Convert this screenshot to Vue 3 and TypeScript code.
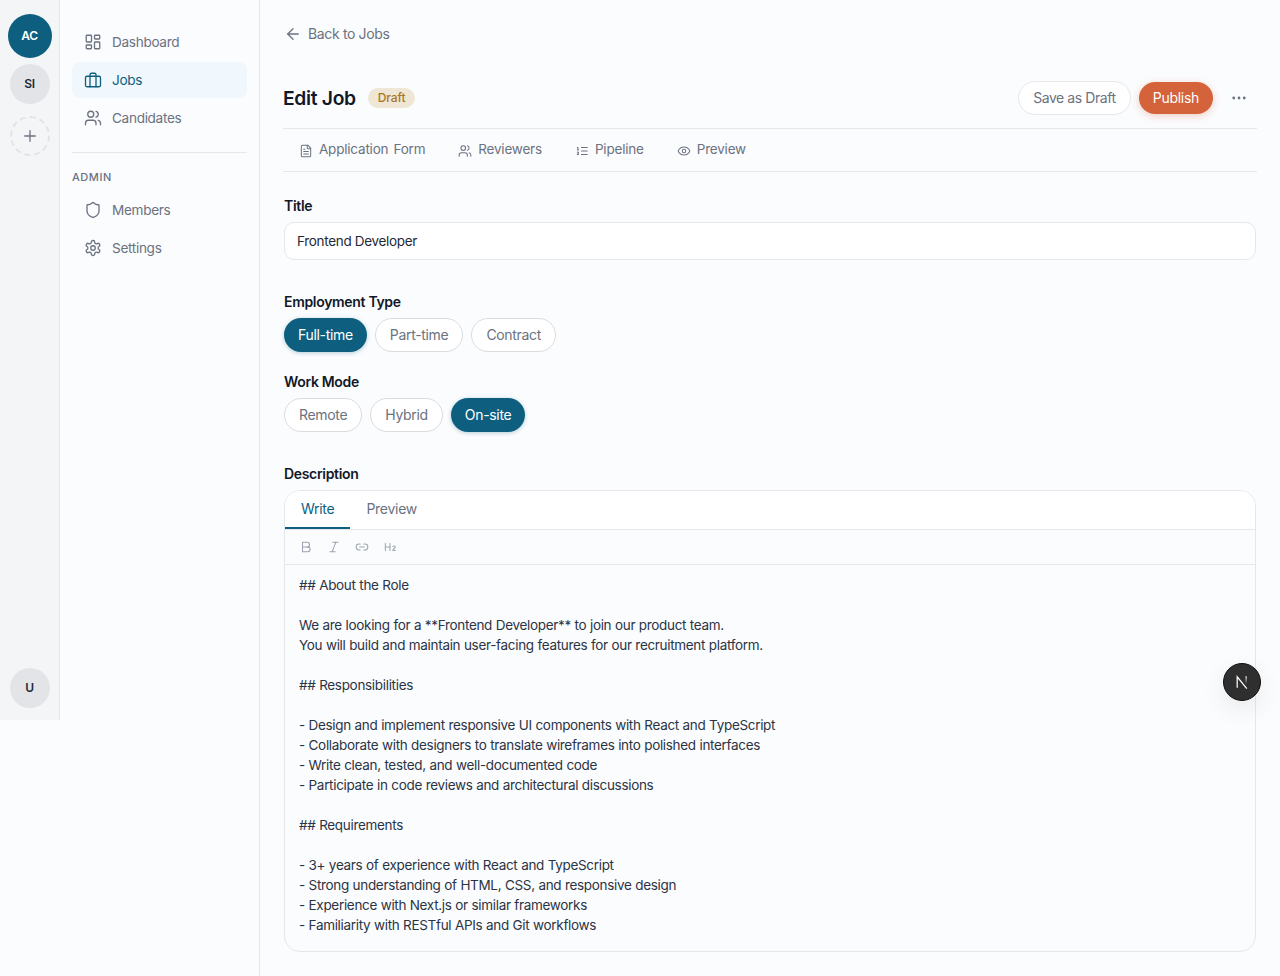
<script setup lang="ts">
const icons: Record<string, string> = {
  dashboard: '<rect x="3" y="3" width="7" height="9" rx="1"/><rect x="14" y="3" width="7" height="5" rx="1"/><rect x="14" y="12" width="7" height="9" rx="1"/><rect x="3" y="16" width="7" height="5" rx="1"/>',
  jobs: '<rect x="2" y="7" width="20" height="14" rx="2"/><path d="M16 21V5a2 2 0 0 0-2-2h-4a2 2 0 0 0-2 2v16"/>',
  users: '<path d="M16 21v-2a4 4 0 0 0-4-4H6a4 4 0 0 0-4 4v2"/><circle cx="9" cy="7" r="4"/><path d="M22 21v-2a4 4 0 0 0-3-3.87"/><path d="M16 3.13a4 4 0 0 1 0 7.75"/>',
  shield: '<path d="M20 13c0 5-3.5 7.5-7.66 8.95a1 1 0 0 1-.67-.01C7.5 20.5 4 18 4 13V6a1 1 0 0 1 1-1c2 0 4.5-1.2 6.24-2.72a1.17 1.17 0 0 1 1.52 0C14.51 3.81 17 5 19 5a1 1 0 0 1 1 1z"/>',
  settings: '<path d="M12.22 2h-.44a2 2 0 0 0-2 2v.18a2 2 0 0 1-1 1.73l-.43.25a2 2 0 0 1-2 0l-.15-.08a2 2 0 0 0-2.73.73l-.22.38a2 2 0 0 0 .73 2.73l.15.1a2 2 0 0 1 1 1.72v.51a2 2 0 0 1-1 1.74l-.15.09a2 2 0 0 0-.73 2.73l.22.38a2 2 0 0 0 2.73.73l.15-.08a2 2 0 0 1 2 0l.43.25a2 2 0 0 1 1 1.73V20a2 2 0 0 0 2 2h.44a2 2 0 0 0 2-2v-.18a2 2 0 0 1 1-1.73l.43-.25a2 2 0 0 1 2 0l.15.08a2 2 0 0 0 2.73-.73l.22-.39a2 2 0 0 0-.73-2.73l-.15-.08a2 2 0 0 1-1-1.74v-.5a2 2 0 0 1 1-1.74l.15-.09a2 2 0 0 0 .73-2.73l-.22-.38a2 2 0 0 0-2.73-.73l-.15.08a2 2 0 0 1-2 0l-.43-.25a2 2 0 0 1-1-1.73V4a2 2 0 0 0-2-2z"/><circle cx="12" cy="12" r="3"/>',
  file: '<path d="M15 2H6a2 2 0 0 0-2 2v16a2 2 0 0 0 2 2h12a2 2 0 0 0 2-2V7Z"/><path d="M14 2v4a2 2 0 0 0 2 2h4"/><path d="M10 9H8"/><path d="M16 13H8"/><path d="M16 17H8"/>',
  list: '<path d="M11 12h10"/><path d="M11 18h10"/><path d="M11 6h10"/><path d="M4 10h2"/><path d="M4 6h1v4"/><path d="M6 18H4c0-1 2-1.5 2-3s-1-1.5-2-1"/>',
  eye: '<path d="M2 12s3-7 10-7 10 7 10 7-3 7-10 7-10-7-10-7Z"/><circle cx="12" cy="12" r="3"/>',
  bold: '<path d="M14 12a4 4 0 0 0 0-8H6v8"/><path d="M15 20a4 4 0 0 0 0-8H6v8Z"/>',
  italic: '<line x1="19" y1="4" x2="10" y2="4"/><line x1="14" y1="20" x2="5" y2="20"/><line x1="15" y1="4" x2="9" y2="20"/>',
  link: '<path d="M9 17H7A5 5 0 0 1 7 7h2"/><path d="M15 7h2a5 5 0 1 1 0 10h-2"/><line x1="8" y1="12" x2="16" y2="12"/>',
  heading: '<path d="M4 12h8"/><path d="M4 18V6"/><path d="M12 18V6"/><path d="M21 18h-4c0-4 4-3 4-6 0-1.5-2-2.5-4-1"/>',
}

const mainNav = [
  { label: 'Dashboard', icon: 'dashboard' },
  { label: 'Jobs', icon: 'jobs', active: true },
  { label: 'Candidates', icon: 'users' },
]
const adminNav = [
  { label: 'Members', icon: 'shield' },
  { label: 'Settings', icon: 'settings' },
]
const jobTabs = [
  { label: 'Application Form', icon: 'file' },
  { label: 'Reviewers', icon: 'users' },
  { label: 'Pipeline', icon: 'list' },
  { label: 'Preview', icon: 'eye' },
]
const employmentTypes = [
  { label: 'Full-time', active: true },
  { label: 'Part-time' },
  { label: 'Contract' },
]
const workModes = [
  { label: 'Remote' },
  { label: 'Hybrid' },
  { label: 'On-site', active: true },
]
const toolbar = ['bold', 'italic', 'link', 'heading']

const description = `## About the Role

We are looking for a **Frontend Developer** to join our product team.
You will build and maintain user-facing features for our recruitment platform.

## Responsibilities

- Design and implement responsive UI components with React and TypeScript
- Collaborate with designers to translate wireframes into polished interfaces
- Write clean, tested, and well-documented code
- Participate in code reviews and architectural discussions

## Requirements

- 3+ years of experience with React and TypeScript
- Strong understanding of HTML, CSS, and responsive design
- Experience with Next.js or similar frameworks
- Familiarity with RESTful APIs and Git workflows`
</script>

<template>
  <div class="layout">
    <!-- Переключатель организаций -->
    <aside class="rail">
      <div class="rail__top">
        <div class="avatar avatar--current"><span>AC</span></div>
        <div class="avatar"><span>SI</span></div>
        <div class="avatar avatar--add">
          <svg width="18" height="18" viewBox="0 0 24 24" class="icon"><path d="M5 12h14" /><path d="M12 5v14" /></svg>
        </div>
      </div>
      <div class="avatar"><span>U</span></div>
    </aside>

    <!-- Боковое меню -->
    <nav class="sidebar">
      <a v-for="item in mainNav" :key="item.label" class="nav-item" :class="{ 'nav-item--active': item.active }">
        <svg width="18" height="18" viewBox="0 0 24 24" class="icon" v-html="icons[item.icon]"></svg>
        <span>{{ item.label }}</span>
      </a>
      <div class="sidebar__divider"></div>
      <div class="sidebar__heading">ADMIN</div>
      <a v-for="item in adminNav" :key="item.label" class="nav-item">
        <svg width="18" height="18" viewBox="0 0 24 24" class="icon" v-html="icons[item.icon]"></svg>
        <span>{{ item.label }}</span>
      </a>
    </nav>

    <main class="main">
      <a class="back">
        <svg width="18" height="18" viewBox="0 0 24 24" class="icon"><path d="m12 19-7-7 7-7" /><path d="M19 12H5" /></svg>
        <span>Back to Jobs</span>
      </a>

      <header class="job-header">
        <div class="job-header__title">
          <h1>Edit Job</h1>
          <span class="badge">Draft</span>
        </div>
        <div class="job-header__actions">
          <button class="btn btn--ghost">Save as Draft</button>
          <button class="btn btn--primary">Publish</button>
          <button class="btn-more" aria-label="More">
            <svg width="18" height="18" viewBox="0 0 24 24" class="icon">
              <circle cx="12" cy="12" r="1" /><circle cx="19" cy="12" r="1" /><circle cx="5" cy="12" r="1" />
            </svg>
          </button>
        </div>
      </header>

      <div class="job-tabs">
        <a v-for="tab in jobTabs" :key="tab.label" class="job-tab">
          <svg width="14" height="14" viewBox="0 0 24 24" class="icon" v-html="icons[tab.icon]"></svg>
          <span>{{ tab.label }}</span>
        </a>
      </div>

      <section class="field field--title">
        <label class="field__label">Title</label>
        <div class="input">Frontend Developer</div>
      </section>

      <section class="field field--type">
        <label class="field__label">Employment Type</label>
        <div class="pills">
          <button v-for="p in employmentTypes" :key="p.label" class="pill" :class="{ 'pill--active': p.active }">{{ p.label }}</button>
        </div>
      </section>

      <section class="field field--mode">
        <label class="field__label">Work Mode</label>
        <div class="pills">
          <button v-for="p in workModes" :key="p.label" class="pill" :class="{ 'pill--active': p.active }">{{ p.label }}</button>
        </div>
      </section>

      <section class="field field--desc">
        <label class="field__label">Description</label>
        <div class="editor">
          <div class="editor__tabs">
            <span class="editor__tab editor__tab--active">Write</span>
            <span class="editor__tab">Preview</span>
          </div>
          <div class="editor__toolbar">
            <svg v-for="t in toolbar" :key="t" width="14" height="14" viewBox="0 0 24 24" class="icon" v-html="icons[t]"></svg>
          </div>
          <div class="editor__body">{{ description }}</div>
        </div>
      </section>
    </main>

    <!-- Индикатор Next.js -->
    <div class="dev-badge">
      <svg width="14" height="14" viewBox="0 0 16 16" fill="none">
        <defs>
          <linearGradient id="next-fade" x1="0" y1="0" x2="0" y2="1">
            <stop offset="0" stop-color="#fff" />
            <stop offset="1" stop-color="#fff" stop-opacity="0" />
          </linearGradient>
        </defs>
        <path d="M2.5 14.5V2l11 13.5" stroke="#fff" stroke-width="1.4" />
        <rect x="12" y="1.5" width="1.4" height="9" fill="url(#next-fade)" />
      </svg>
    </div>
  </div>
</template>

<style>
body {
  background: #fbfcfe;
}
</style>

<style scoped>
.layout {
  display: flex;
  position: relative;
  min-height: 976px;
  font-family: Inter, 'Liberation Sans', sans-serif;
  letter-spacing: -0.02em;
  color: #111827;
}

.icon {
  fill: none;
  stroke: currentColor;
  stroke-width: 1.75;
  stroke-linecap: round;
  stroke-linejoin: round;
  flex-shrink: 0;
}

/* Рейка с аватарами */
.rail {
  width: 60px;
  height: 720px;
  box-sizing: border-box;
  flex-shrink: 0;
  background: #f4f5f7;
  border-right: 1px solid #e5e7eb;
  padding: 14px 0 12px;
  display: flex;
  flex-direction: column;
  align-items: center;
  justify-content: space-between;
}

.rail__top {
  display: flex;
  flex-direction: column;
  align-items: center;
  gap: 12px;
}

.rail__top .avatar--current + .avatar {
  margin-top: -6px;
}

.avatar {
  width: 40px;
  height: 40px;
  border-radius: 50%;
  background: #e2e4e8;
  color: #1f2937;
  font-size: 12px;
  font-weight: 600;
  display: flex;
  align-items: center;
  justify-content: center;
}

.avatar span {
  margin-bottom: 2px;
}

.avatar--current {
  width: 44px;
  height: 44px;
  background: #0e5f7f;
  color: #fff;
}

.avatar--add {
  box-sizing: border-box;
  background: none;
  border: 2px dashed #e2e4e8;
  color: #6b7280;
}

/* Боковое меню */
.sidebar {
  width: 200px;
  box-sizing: border-box;
  flex-shrink: 0;
  border-right: 1px solid #e5e7eb;
  padding: 24px 12px 0;
  display: flex;
  flex-direction: column;
  gap: 2px;
}

.nav-item {
  height: 36px;
  padding: 0 12px;
  border-radius: 8px;
  display: flex;
  align-items: center;
  gap: 10px;
  font-size: 13.6px;
  color: #6b7280;
}

.nav-item--active {
  background: #f0f8fd;
  color: #0e5f7f;
}

.sidebar__divider {
  height: 1px;
  background: #e5e7eb;
  margin: 14px 0 14px;
}

.sidebar__heading {
  font-size: 11px;
  font-weight: 500;
  letter-spacing: 0.05em;
  color: #6b7280;
  line-height: 16px;
  margin-bottom: 5px;
}

/* Основная часть */
.main {
  flex: 1;
  min-width: 0;
  padding: 24px 24px 25px;
  display: flex;
  flex-direction: column;
}

.back {
  display: flex;
  align-items: center;
  gap: 6px;
  height: 20px;
  font-size: 14px;
  letter-spacing: -0.025em;
  color: #6b7280;
}

.back span {
  margin-bottom: 2px;
}

.job-header {
  margin: 28px -1px 0;
  height: 52px;
  padding-bottom: 4px;
  box-sizing: content-box;
  border-bottom: 1px solid #e5e7eb;
  display: flex;
  align-items: center;
  justify-content: space-between;
}

.job-header__title {
  display: flex;
  align-items: center;
  gap: 12px;
}

h1 {
  margin: 0;
  font-size: 19.3px;
  font-weight: 600;
  line-height: 28px;
}

.badge {
  padding: 0 10px;
  height: 20px;
  line-height: 20px;
  border-radius: 10px;
  background: #efe6d5;
  color: #a8781f;
  font-size: 12px;
  font-weight: 500;
  letter-spacing: -0.01em;
}

.job-header__actions {
  display: flex;
  align-items: center;
  gap: 8px;
}

.btn {
  height: 34px;
  padding: 0 14px 2px;
  border-radius: 17px;
  font: inherit;
  letter-spacing: -0.03em;
  font-size: 14px;
  background: #fff;
  border: 1px solid #e5e7eb;
  color: #6b7280;
}

.btn--primary {
  height: 32px;
  border: none;
  background: #d4623a;
  color: #fff;
  letter-spacing: -0.02em;
  box-shadow: 0 2px 8px rgba(212, 98, 58, 0.3);
}

.btn-more {
  width: 36px;
  height: 32px;
  border: none;
  background: none;
  color: #6b7280;
  display: flex;
  align-items: center;
  justify-content: center;
  padding: 0;
}

.job-tabs {
  margin: 0 -1px;
  height: 42px;
  padding: 0 16px;
  border-bottom: 1px solid #e5e7eb;
  display: flex;
  align-items: center;
  gap: 33px;
}

.job-tab {
  display: flex;
  align-items: center;
  gap: 6px;
  font-size: 13.5px;
  letter-spacing: -0.015em;
  word-spacing: 1.5px;
  color: #6b7280;
}

.job-tab .icon {
  margin-top: 2px;
}

.job-tab span {
  margin-bottom: 2px;
}

.field__label {
  display: block;
  font-size: 14px;
  font-weight: 600;
  line-height: 20px;
  margin-bottom: 6px;
}

.field--title {
  margin-top: 24px;
}

.field--type {
  margin-top: 32px;
}

.field--mode {
  margin-top: 20px;
}

.field--desc {
  margin-top: 32px;
}

.input {
  height: 38px;
  box-sizing: border-box;
  border: 1px solid #e5e7eb;
  border-radius: 10px;
  background: #fff;
  padding: 0 12px;
  font-size: 13.5px;
  line-height: 36px;
  color: #1f2937;
}

.pills {
  display: flex;
  gap: 8px;
}

.pill {
  height: 34px;
  padding: 0 14px 2px;
  border-radius: 17px;
  border: 1px solid #d9dce1;
  background: #fff;
  font: inherit;
  letter-spacing: inherit;
  font-size: 14px;
  color: #6b7280;
}

.pill--active {
  border: none;
  background: #0e5f7f;
  color: #fff;
  box-shadow: 0 1px 4px rgba(14, 95, 127, 0.3);
}

/* Редактор описания */
.editor {
  border: 1px solid #e5e7eb;
  border-radius: 16px;
  overflow: hidden;
}

.editor__tabs {
  height: 38px;
  background: #fff;
  border-bottom: 1px solid #e5e7eb;
  display: flex;
}

.editor__tab {
  padding: 0 16px;
  font-size: 14px;
  line-height: 35px;
  letter-spacing: -0.02em;
  color: #6b7280;
}

.editor__tab--active {
  color: #0e5f7f;
  box-shadow: inset 0 -2px 0 #0e5f7f;
}

.editor__toolbar {
  height: 34px;
  padding: 0 14px;
  border-bottom: 1px solid #e5e7eb;
  display: flex;
  align-items: center;
  gap: 14px;
  color: #9ca3af;
}

.editor__body {
  padding: 10px 14px 16px;
  font-size: 13.5px;
  word-spacing: 0.2px;
  line-height: 20px;
  white-space: pre-wrap;
  color: #2b3444;
}

.dev-badge {
  position: absolute;
  left: 1223px;
  top: 663px;
  width: 38px;
  height: 38px;
  border-radius: 50%;
  background: #2f2f2f;
  border: 1px solid #111;
  box-sizing: border-box;
  display: flex;
  align-items: center;
  justify-content: center;
  box-shadow: 0 8px 24px rgba(0, 0, 0, 0.08);
}
</style>
